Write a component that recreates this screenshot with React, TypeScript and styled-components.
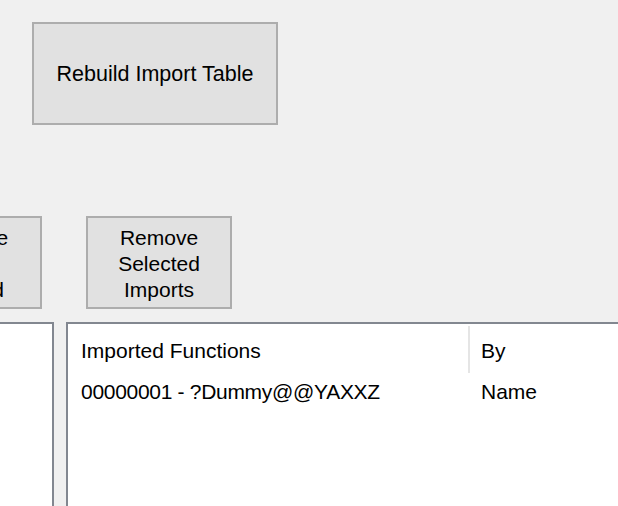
import React from 'react'
import styled, { createGlobalStyle } from "styled-components"

const GlobalStyle = createGlobalStyle`
    html, body {
        margin: 0;
        padding: 0;
        overflow: hidden;
        background: #f0f0f0;
    }
    * {
        box-sizing: border-box;
    }
`

const imports = [
    { name: "00000001 - ?Dummy@@YAXXZ", by: "Name" },
]

function App() {
    return (
        <>
            <GlobalStyle />
            <Window>
                <TopRow>
                    <RebuildButton>Rebuild Import Table</RebuildButton>
                </TopRow>

                <ButtonRow>
                    <TallButton $offset={-104}>
                        <span>Remove</span>
                        <span>All</span>
                        <span>Loaded</span>
                    </TallButton>
                    <TallButton>
                        <span>Remove</span>
                        <span>Selected</span>
                        <span>Imports</span>
                    </TallButton>
                </ButtonRow>

                <PanelRow>
                    <LeftPanel />
                    <ListPanel>
                        <HeaderRow>
                            <NameCell>Imported Functions</NameCell>
                            <Separator />
                            <ByCell>By</ByCell>
                        </HeaderRow>
                        {imports.map((item) => (
                            <ItemRow key={item.name}>
                                <NameCell $tight>{item.name}</NameCell>
                                <Spacer />
                                <ByCell>{item.by}</ByCell>
                            </ItemRow>
                        ))}
                    </ListPanel>
                </PanelRow>
            </Window>
        </>
    )
}

export default App

const Window = styled.div`
    width: 618px;
    height: 506px;
    overflow: hidden;
    background: #f0f0f0;
    display: flex;
    flex-direction: column;
    font-family: "Liberation Sans", Arial, sans-serif;
    font-size: 21px;
    color: #000;
`

const TopRow = styled.div`
    display: flex;
    padding: 22px 0 0 32px;
`

const ButtonBase = styled.div`
    background: #e1e1e1;
    border: 2px solid #adadad;
    display: flex;
    align-items: center;
    justify-content: center;
    flex-shrink: 0;
`

const RebuildButton = styled(ButtonBase)`
    width: 246px;
    height: 103px;
    line-height: 24px;
    font-size: 21.5px;
`

const ButtonRow = styled.div`
    display: flex;
    gap: 44px;
    margin-top: 91px;
`

const TallButton = styled(ButtonBase)<{ $offset?: number }>`
    width: 146px;
    height: 93px;
    flex-direction: column;
    line-height: 26px;
    padding-top: 3px;
    margin-left: ${(p) => p.$offset ?? 0}px;
    text-align: center;
`

const PanelRow = styled.div`
    display: flex;
    gap: 12px;
    margin-top: 13px;
    flex: 1;
`

const PanelBase = styled.div`
    background: #fff;
    border: 2px solid #828790;
    border-bottom: none;
    height: 200px;
    flex-shrink: 0;
`

const LeftPanel = styled(PanelBase)`
    width: 200px;
    margin-left: -146px;
`

const ListPanel = styled(PanelBase)`
    width: 620px;
    border-right: none;
    display: flex;
    flex-direction: column;
`

const HeaderRow = styled.div`
    display: flex;
    align-items: center;
    height: 54px;
    line-height: 24px;
`

const ItemRow = styled.div`
    display: flex;
    align-items: center;
    height: 28px;
    line-height: 28px;
`

const NameCell = styled.div<{ $tight?: boolean }>`
    width: 400px;
    padding-left: 13px;
    white-space: nowrap;
    letter-spacing: ${(p) => (p.$tight ? "-0.3px" : "0")};
`

const Separator = styled.div`
    width: 2px;
    height: 47px;
    margin-top: 2px;
    align-self: flex-start;
    background: #e5e5e5;
`

const Spacer = styled.div`
    width: 2px;
`

const ByCell = styled.div`
    padding-left: 11px;
    white-space: nowrap;
`
